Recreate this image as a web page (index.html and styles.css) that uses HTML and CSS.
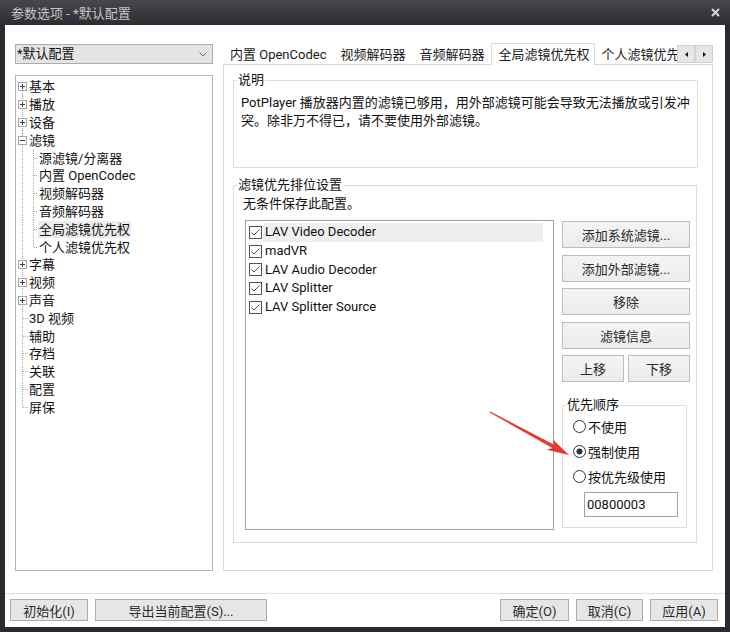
FILE: index.html
```html
<!DOCTYPE html>
<html lang="zh-CN">
<head>
<meta charset="utf-8">
<title>参数选项</title>
<link rel="stylesheet" href="styles.css">
</head>
<body>
<div class="window">
  <div class="titlebar">
    <span class="title">参数选项 - *默认配置</span>
    <svg class="close" width="9" height="9" viewBox="0 0 9 9"><path d="M1 1L8 8M8 1L1 8" stroke="#d6d6d6" stroke-width="2"/></svg>
  </div>
  <div class="client">
    <div class="main">
      <div class="left">
        <div class="combo">
          <span>*默认配置</span>
          <svg width="8" height="5" viewBox="0 0 8 5"><polyline points="0.5,0.5 4,4 7.5,0.5" fill="none" stroke="#707070"/></svg>
        </div>
        <div class="tree">
          <div class="row top first"><i class="exp"></i><span>基本</span></div>
          <div class="row top"><i class="exp"></i><span>播放</span></div>
          <div class="row top"><i class="exp"></i><span>设备</span></div>
          <div class="row top"><i class="exp minus"></i><span>滤镜</span></div>
          <div class="row child"><span>源滤镜/分离器</span></div>
          <div class="row child"><span>内置 OpenCodec</span></div>
          <div class="row child"><span>视频解码器</span></div>
          <div class="row child"><span>音频解码器</span></div>
          <div class="row child"><span class="sel">全局滤镜优先权</span></div>
          <div class="row child last"><span>个人滤镜优先权</span></div>
          <div class="row top"><i class="exp"></i><span>字幕</span></div>
          <div class="row top"><i class="exp"></i><span>视频</span></div>
          <div class="row top"><i class="exp"></i><span>声音</span></div>
          <div class="row leaf"><i class="gap"></i><span>3D 视频</span></div>
          <div class="row leaf"><i class="gap"></i><span>辅助</span></div>
          <div class="row leaf"><i class="gap"></i><span>存档</span></div>
          <div class="row leaf"><i class="gap"></i><span>关联</span></div>
          <div class="row leaf"><i class="gap"></i><span>配置</span></div>
          <div class="row leaf last"><i class="gap"></i><span>屏保</span></div>
        </div>
      </div>
      <div class="right">
        <div class="tabbar">
          <div class="tabs">
            <div class="tab">内置 OpenCodec</div>
            <div class="tab">视频解码器</div>
            <div class="tab">音频解码器</div>
            <div class="tab sel">全局滤镜优先权</div>
            <div class="tab">个人滤镜优先权</div>
          </div>
          <div class="spin">
            <div class="sbtn"><svg width="3" height="5" viewBox="0 0 3 5"><path d="M3 0V5L0 2.5Z" fill="#111"/></svg></div>
            <div class="sbtn"><svg width="3" height="5" viewBox="0 0 3 5"><path d="M0 0V5L3 2.5Z" fill="#111"/></svg></div>
          </div>
        </div>
        <div class="page">
          <fieldset class="grp desc">
            <legend>说明</legend>
            <div class="desc-text">PotPlayer 播放器内置的滤镜已够用，用外部滤镜可能会导致无法播放或引发冲突。除非万不得已，请不要使用外部滤镜。</div>
          </fieldset>
          <fieldset class="grp prio">
            <legend>滤镜优先排位设置</legend>
            <div class="prio-body">
              <div class="note">无条件保存此配置。</div>
              <div class="prio-row">
                <div class="list">
                  <div class="item"><svg class="chk" width="13" height="13" viewBox="0 0 13 13"><rect x="0.5" y="0.5" width="12" height="12" fill="#fff" stroke="#555"/><polyline points="2.5,6.5 5,9 10.5,3.5" fill="none" stroke="#555"/></svg><span class="il hl">LAV Video Decoder</span></div>
                  <div class="item"><svg class="chk" width="13" height="13" viewBox="0 0 13 13"><rect x="0.5" y="0.5" width="12" height="12" fill="#fff" stroke="#555"/><polyline points="2.5,6.5 5,9 10.5,3.5" fill="none" stroke="#555"/></svg><span class="il">madVR</span></div>
                  <div class="item"><svg class="chk" width="13" height="13" viewBox="0 0 13 13"><rect x="0.5" y="0.5" width="12" height="12" fill="#fff" stroke="#555"/><polyline points="2.5,6.5 5,9 10.5,3.5" fill="none" stroke="#555"/></svg><span class="il">LAV Audio Decoder</span></div>
                  <div class="item"><svg class="chk" width="13" height="13" viewBox="0 0 13 13"><rect x="0.5" y="0.5" width="12" height="12" fill="#fff" stroke="#555"/><polyline points="2.5,6.5 5,9 10.5,3.5" fill="none" stroke="#555"/></svg><span class="il">LAV Splitter</span></div>
                  <div class="item"><svg class="chk" width="13" height="13" viewBox="0 0 13 13"><rect x="0.5" y="0.5" width="12" height="12" fill="#fff" stroke="#555"/><polyline points="2.5,6.5 5,9 10.5,3.5" fill="none" stroke="#555"/></svg><span class="il">LAV Splitter Source</span></div>
                </div>
                <div class="side">
                  <div class="btn">添加系统滤镜...</div>
                  <div class="btn">添加外部滤镜...</div>
                  <div class="btn">移除</div>
                  <div class="btn">滤镜信息</div>
                  <div class="updown">
                    <div class="btn">上移</div>
                    <div class="btn">下移</div>
                  </div>
                  <fieldset class="grp order">
                    <legend>优先顺序</legend>
                    <div class="order-body">
                      <div class="radio"><svg width="13" height="13" viewBox="0 0 13 13"><circle cx="6.5" cy="6.5" r="6" fill="#fff" stroke="#333"/></svg><span>不使用</span></div>
                      <div class="radio"><svg width="13" height="13" viewBox="0 0 13 13"><circle cx="6.5" cy="6.5" r="6" fill="#fff" stroke="#333"/><circle cx="6.5" cy="6.5" r="3" fill="#333"/></svg><span>强制使用</span></div>
                      <div class="radio"><svg width="13" height="13" viewBox="0 0 13 13"><circle cx="6.5" cy="6.5" r="6" fill="#fff" stroke="#333"/></svg><span>按优先级使用</span></div>
                      <div class="input">00800003</div>
                    </div>
                  </fieldset>
                </div>
              </div>
            </div>
          </fieldset>
        </div>
      </div>
    </div>
    <div class="footer">
      <div class="fbtn w78">初始化(I)</div>
      <div class="fbtn w172">导出当前配置(S)...</div>
      <div class="fbtn w69 push">确定(O)</div>
      <div class="fbtn w67">取消(C)</div>
      <div class="fbtn w68">应用(A)</div>
    </div>
  </div>
  <svg class="arrow" width="730" height="632" viewBox="0 0 730 632">
    <polygon points="489.7,412.5 552.3,448.0 546.8,449.8 569,455 552.6,439.2 554.1,444.8 490.3,411.5" fill="#e53b2f"/>
  </svg>
</div>
</body>
</html>
```

FILE: styles.css
```css
* { box-sizing: border-box; }
html, body { margin: 0; padding: 0; }
body {
  width: 730px;
  height: 632px;
  overflow: hidden;
  background: #29292e;
  font-family: Roboto, "Noto Sans CJK SC", sans-serif;
  font-size: 13px;
  color: #111;
}
.window {
  width: 730px;
  height: 632px;
  display: flex;
  flex-direction: column;
  background: #29292e;
  position: relative;
}
.titlebar {
  height: 25px;
  flex: none;
  display: flex;
  align-items: center;
  justify-content: space-between;
  padding: 0 10px 0 11px;
  background: linear-gradient(#47474d, #2c2c32);
  color: #c6c6c6;
  font-size: 13px;
}
.client {
  flex: 1;
  margin: 0 5px 5px;
  background: #fff;
  display: flex;
  flex-direction: column;
}
.main {
  display: flex;
  gap: 10px;
  padding: 18px 12px 0 10px;
}
.left { width: 198px; flex: none; }
.combo {
  margin-top: 1px;
  height: 20px;
  border: 1px solid #acacac;
  background: #e4e4e4;
  display: flex;
  align-items: center;
  justify-content: space-between;
  padding: 0 5px 0 1px;
  line-height: 18px;
}
.tree {
  margin-top: 11px;
  height: 496px;
  border: 1px solid #b4b4b4;
  padding-top: 2px;
  --dv: repeating-linear-gradient(to bottom, #a8a8a8 0 1px, transparent 1px 2px);
  --dh: repeating-linear-gradient(to right, #a8a8a8 0 1px, transparent 1px 2px);
}
.row {
  height: 17.8px;
  display: flex;
  align-items: center;
  padding-left: 2px;
  white-space: nowrap;
  line-height: 17px;
}
.row.top { background: var(--dv) 6px 0 / 1px 100% no-repeat; }
.row.top.first { background: var(--dv) 6px 100% / 1px 50% no-repeat; }
.row.leaf { background: var(--dv) 6px 0 / 1px 100% no-repeat, var(--dh) 7px 50% / 5px 1px no-repeat; }
.row.leaf.last { background: var(--dv) 6px 0 / 1px 50% no-repeat, var(--dh) 7px 50% / 5px 1px no-repeat; }
.row.child {
  padding-left: 22px;
  background: var(--dv) 6px 0 / 1px 100% no-repeat, var(--dv) 17px 0 / 1px 100% no-repeat, var(--dh) 18px 50% / 4px 1px no-repeat;
}
.row.child.last {
  background: var(--dv) 6px 0 / 1px 100% no-repeat, var(--dv) 17px 0 / 1px 50% no-repeat, var(--dh) 18px 50% / 4px 1px no-repeat;
}
.row span { padding: 0 1px; }
.row.top span, .row.leaf span { padding: 0; }
.row span.sel { background: #ececec; }
.exp {
  flex: none;
  width: 9px;
  height: 9px;
  margin-right: 2px;
  border: 1px solid #a6a6a6;
  background:
    linear-gradient(#3c3c3c, #3c3c3c) center / 5px 1px no-repeat,
    linear-gradient(#3c3c3c, #3c3c3c) center / 1px 5px no-repeat,
    #fff;
}
.exp.minus {
  background: linear-gradient(#3c3c3c, #3c3c3c) center / 5px 1px no-repeat, #fff;
}
.gap { flex: none; width: 9px; margin-right: 2px; }

.right { flex: 1; display: flex; flex-direction: column; min-width: 0; }
.tabbar {
  height: 22px;
  display: flex;
  background: linear-gradient(#d9d9d9, #d9d9d9) 0 100% / 100% 1px no-repeat;
}
.tabs {
  width: 454px;
  flex: none;
  display: flex;
  align-items: flex-end;
  overflow: hidden;
}
.tab {
  flex: none;
  height: 21px;
  line-height: 19px;
  padding: 0 6px;
  border: 1px solid transparent;
  border-bottom: 0;
  white-space: nowrap;
  color: #1a1a1a;
}
.tab.sel {
  height: 22px;
  padding: 0 4px 0 6px;
  border-color: #d9d9d9;
  background: #fff;
  line-height: 21px;
}
.spin { display: flex; padding-top: 2px; }
.sbtn {
  width: 18px;
  height: 18px;
  background: #e6e6e6;
  border: 1px solid #d0d0d0;
  display: flex;
  align-items: center;
  justify-content: center;
}
.sbtn + .sbtn { border-left: 1px solid #d6d6d6; }

.page {
  height: 506px;
  border: 1px solid #d9d9d9;
  border-top: 0;
  padding: 7px 0 0 9px;
}
fieldset.grp {
  margin: 0;
  padding: 0;
  border: 1px solid #dcdcdc;
  min-width: 0;
}
fieldset.grp legend {
  padding: 0 1px;
  margin-left: 3px;
  line-height: 16px;
  color: #111;
}
fieldset.desc { width: 465px; }
.desc-text {
  height: 79px;
  padding: 6px 4px 0 7px;
  line-height: 18px;
}
fieldset.prio { width: 464px; margin-top: 9px; }
.prio-body { padding: 2px 6px 12px 9px; }
.note { line-height: 18px; }
.prio-row { display: flex; gap: 8px; margin-top: 7px; }
.list {
  width: 309px;
  height: 310px;
  margin-left: 2px;
  border: 1px solid #a3a3a3;
  padding: 2px 0 0 3px;
}
.item {
  height: 18.8px;
  display: flex;
  align-items: center;
}
.chk { flex: none; }
.il {
  width: 280px;
  margin-left: 1px;
  padding-left: 2px;
  line-height: 18.8px;
  white-space: nowrap;
}
.il.hl { background: #efefef; }
.side { width: 128px; padding-top: 1px; }
.btn {
  height: 27px;
  margin-bottom: 6.5px;
  border: 1px solid #bdbdbd;
  background: linear-gradient(#f4f4f4, #ececec);
  display: flex;
  align-items: center;
  justify-content: center;
  color: #2a2a2a;
}
.updown { display: flex; gap: 4px; }
.updown .btn { width: 62px; margin-bottom: 0; }
fieldset.order { width: 125px; margin-top: 15px; }
.order-body { padding: 1px 0 10px 10px; }
.radio {
  height: 25px;
  display: flex;
  align-items: center;
  gap: 2px;
}
.radio svg { flex: none; }
.input {
  margin: 3px 0 0 11px;
  width: 94px;
  height: 25px;
  border: 1px solid #a3a3a3;
  padding-left: 2px;
  line-height: 23px;
}

.footer {
  margin-top: 22px;
  border-top: 1px solid #e0e0e0;
  padding: 5px 7px 0 5px;
  display: flex;
  gap: 7px;
}
.fbtn {
  height: 22px;
  border: 1px solid #adadad;
  background: #e6e6e6;
  display: flex;
  align-items: center;
  justify-content: center;
  color: #2a2a2a;
}
.w78 { width: 78px; }
.w172 { width: 172px; }
.w69 { width: 69px; }
.w67 { width: 67px; }
.w68 { width: 68px; }
.push { margin-left: auto; }
.arrow {
  position: absolute;
  left: 0;
  top: 0;
  pointer-events: none;
}
```
